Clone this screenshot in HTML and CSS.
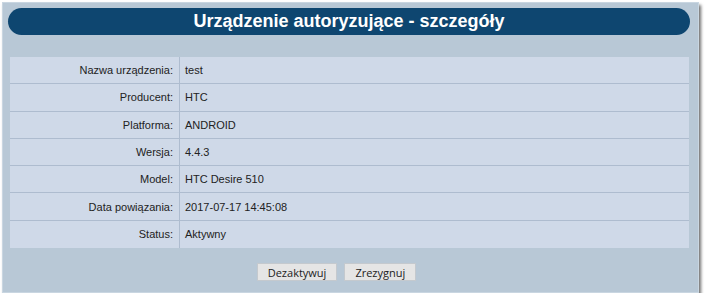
FILE: index.html
```html
<!DOCTYPE html>
<html lang="pl">
<head>
    <meta charset="UTF-8">
    <title>Urządzenie autoryzujące - szczegóły</title>
    <link rel="stylesheet" href="styles.css">
</head>
<body>
<div class="panel">
    <div class="title">Urządzenie autoryzujące - szczegóły</div>
    <div class="details">
        <div class="row"><span class="label">Nazwa urządzenia:</span><span class="value">test</span></div>
        <div class="row"><span class="label">Producent:</span><span class="value">HTC</span></div>
        <div class="row"><span class="label">Platforma:</span><span class="value">ANDROID</span></div>
        <div class="row"><span class="label">Wersja:</span><span class="value">4.4.3</span></div>
        <div class="row"><span class="label">Model:</span><span class="value">HTC Desire 510</span></div>
        <div class="row"><span class="label">Data powiązania:</span><span class="value">2017-07-17 14:45:08</span></div>
        <div class="row"><span class="label">Status:</span><span class="value">Aktywny</span></div>
    </div>
    <div class="buttons">
        <button class="btn">Dezaktywuj</button>
        <button class="btn">Zrezygnuj</button>
    </div>
</div>
</body>
</html>
```

FILE: styles.css
```css
* {
    margin: 0;
    padding: 0;
    box-sizing: border-box;
}

body {
    background: #fff;
    font-family: "Liberation Sans", Arial, sans-serif;
}

.panel {
    width: 697px;
    height: 291px;
    margin: 2px 0 0 2px;
    padding: 5px 8px 0 5px;
    background: #b8c8d6;
    border: 1px solid #c9d6e1;
    box-shadow: 2px 3px 3px #6f6f6f;
}

.title {
    height: 27px;
    line-height: 27px;
    border-radius: 14px;
    background: #0e4670;
    color: #fff;
    font-size: 18px;
    font-weight: bold;
    text-align: center;
}

.details {
    margin: 22px 1px 0 2px;
    background: #cfd9e8;
}

.row {
    display: grid;
    grid-template-columns: 170px 1fr;
    height: 27.3px;
    border-bottom: 1px solid #aebccf;
    font-size: 11px;
    color: #222;
}

.row:last-child {
    border-bottom: 0;
}

.label {
    display: flex;
    align-items: center;
    justify-content: flex-end;
    padding-right: 6px;
    border-right: 1px solid #aebccf;
}

.value {
    display: flex;
    align-items: center;
    padding-left: 5px;
}

.buttons {
    display: flex;
    justify-content: center;
    gap: 7px;
    margin-top: 15px;
    padding-right: 25px;
}

.btn {
    height: 18px;
    padding: 0 10px;
    background: #e5e5e5;
    border: 1px solid #c4c9ce;
    font-family: "Open Sans", "DejaVu Sans", sans-serif;
    font-size: 11px;
    color: #222;
}
```
